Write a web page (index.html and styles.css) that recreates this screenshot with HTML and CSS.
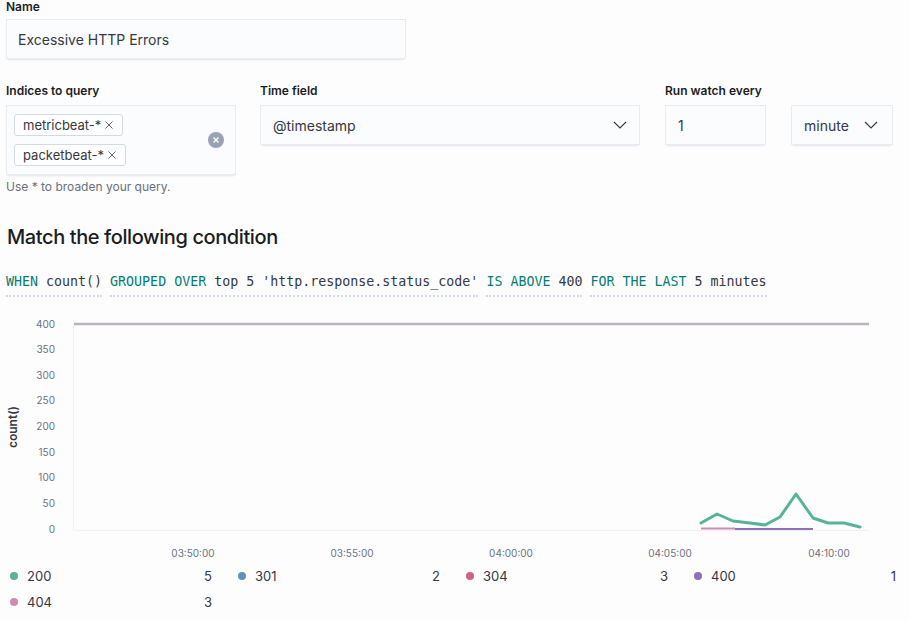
FILE: index.html
```html
<!DOCTYPE html>
<html>
<head>
<meta charset="utf-8">
<link rel="stylesheet" href="styles.css">
</head>
<body>
<div class="form">
  <div class="field">
    <label class="label first">Name</label>
    <div class="control name-input">Excessive HTTP Errors</div>
  </div>

  <div class="row">
    <div class="field col-indices">
      <label class="label">Indices to query</label>
      <div class="control combo">
        <div class="pills">
          <span class="pill">metricbeat-* <svg class="pill-x" width="8" height="8" viewBox="0 0 8 8"><path d="M0.5 0.5 L7.5 7.5 M7.5 0.5 L0.5 7.5" stroke="#5a606b" stroke-width="1"/></svg></span>
          <span class="pill">packetbeat-* <svg class="pill-x" width="8" height="8" viewBox="0 0 8 8"><path d="M0.5 0.5 L7.5 7.5 M7.5 0.5 L0.5 7.5" stroke="#5a606b" stroke-width="1"/></svg></span>
        </div>
        <span class="clear">
          <svg width="16" height="16" viewBox="0 0 16 16"><circle cx="8" cy="8" r="8" fill="#98a2b3"/><path d="M5.5 5.5 L10.5 10.5 M10.5 5.5 L5.5 10.5" stroke="#fff" stroke-width="1.3"/></svg>
        </span>
      </div>
      <div class="help">Use * to broaden your query.</div>
    </div>

    <div class="field col-time">
      <label class="label">Time field</label>
      <div class="control select">
        <span>@timestamp</span>
        <svg class="chev" width="14" height="8" viewBox="0 0 14 8"><path d="M1 1 L7 7 L13 1" fill="none" stroke="#343741" stroke-width="1.1"/></svg>
      </div>
    </div>

    <div class="field col-run">
      <label class="label">Run watch every</label>
      <div class="run-pair">
        <div class="control num">1</div>
        <div class="control select unit">
          <span>minute</span>
          <svg class="chev" width="14" height="8" viewBox="0 0 14 8"><path d="M1 1 L7 7 L13 1" fill="none" stroke="#343741" stroke-width="1.1"/></svg>
        </div>
      </div>
    </div>
  </div>

  <h2 class="title">Match the following condition</h2>

  <div class="expr">
    <span class="ex"><span class="kw">WHEN</span> <span class="val">count()</span></span>
    <span class="ex"><span class="kw">GROUPED OVER</span> <span class="val">top 5 'http.response.status_code'</span></span>
    <span class="ex"><span class="kw">IS ABOVE</span> <span class="val">400</span></span>
    <span class="ex"><span class="kw">FOR THE LAST</span> <span class="val">5 minutes</span></span>
  </div>
</div>

<svg class="chart" width="909" height="253" viewBox="0 0 909 253">
  <line x1="73.5" y1="14" x2="73.5" y2="220" stroke="#f1f0f4" stroke-width="1"/>
  <line x1="74" y1="220.5" x2="869" y2="220.5" stroke="#f1f0f4" stroke-width="1"/>
  <g class="ytick" text-anchor="end">
    <text x="55" y="17.5">400</text>
    <text x="55" y="43">350</text>
    <text x="55" y="68.5">300</text>
    <text x="55" y="94">250</text>
    <text x="55" y="120">200</text>
    <text x="55" y="145.5">150</text>
    <text x="55" y="171">100</text>
    <text x="55" y="196.5">50</text>
    <text x="55" y="222.5">0</text>
  </g>
  <text class="ytitle" transform="translate(17 117) rotate(-90)" text-anchor="middle">count()</text>
  <line x1="74" y1="14" x2="869" y2="14" stroke="#b7b5ba" stroke-width="2.5"/>
  <g class="xtick" text-anchor="middle">
    <text x="193" y="246.5">03:50:00</text>
    <text x="352" y="246.5">03:55:00</text>
    <text x="511" y="246.5">04:00:00</text>
    <text x="670" y="246.5">04:05:00</text>
    <text x="829" y="246.5">04:10:00</text>
  </g>
  <polyline points="701,218.5 735,218.5" fill="none" stroke="#ca8eae" stroke-width="2"/>
  <polyline points="735,219 813,219" fill="none" stroke="#9170b8" stroke-width="2"/>
  <polyline points="701,213 717,204 733,211 750,213 765,215 780,207 796,184 813,208 828,213 844,213 860,217" fill="none" stroke="#54b399" stroke-width="3" stroke-linejoin="round" stroke-linecap="round"/>
</svg>

<div class="legend">
  <div class="li"><span class="dot" style="background:#54b399"></span><span class="ll">200</span><span class="lv">5</span></div>
  <div class="li"><span class="dot" style="background:#6092c0"></span><span class="ll">301</span><span class="lv">2</span></div>
  <div class="li"><span class="dot" style="background:#d36086"></span><span class="ll">304</span><span class="lv">3</span></div>
  <div class="li"><span class="dot" style="background:#9170b8"></span><span class="ll">400</span><span class="lv">1</span></div>
  <div class="li"><span class="dot" style="background:#ca8eae"></span><span class="ll">404</span><span class="lv">3</span></div>
</div>
</body>
</html>
```

FILE: styles.css
```css
* { box-sizing: border-box; }
html, body { margin: 0; padding: 0; }
body {
  background: #fefdfe;
  font-family: Inter, "Noto Sans", sans-serif;
  color: #343741;
  width: 909px;
  height: 621px;
  overflow: hidden;
}
.form { padding: 0 6px; }
.field { display: flex; flex-direction: column; }
.label {
  font-size: 12px;
  line-height: 12px;
  font-weight: 600;
  color: #1a1c21;
  margin-bottom: 7px;
}
.label.first {
  line-height: 14px;
  margin-bottom: 5px;
}
.control {
  background: #fbfcfd;
  border: 1px solid #e9ebef;
  box-shadow: 0 1px 1px -1px rgba(152,162,179,.2), 0 3px 2px -2px rgba(152,162,179,.25);
  height: 40px;
  font-size: 14px;
  color: #343741;
  display: flex;
  align-items: center;
  padding: 0 12px;
}
.name-input { width: 400px; padding-left: 11px; }
.row { display: flex; margin-top: 26px; }
.row .label { margin-bottom: 8px; }
.col-indices { width: 230px; }
.col-time { width: 380px; margin-left: 24px; }
.col-run { margin-left: 25px; }
.combo {
  height: 70px;
  padding: 0 11px 0 7px;
}
.pills { display: flex; flex-direction: column; align-items: flex-start; gap: 8px; }
.pill {
  display: inline-flex;
  align-items: center;
  height: 22px;
  padding: 0 9px 0 8px;
  background: #fff;
  border: 1px solid #d3dae6;
  border-radius: 3px;
  font-size: 13px;
  color: #343741;
  white-space: nowrap;
}
.pill-x { margin-left: 4px; display: block; }
.clear { margin-left: auto; display: flex; }
.help { font-size: 12px; line-height: 12px; color: #69707d; margin-top: 6px; }
.select { justify-content: space-between; }
.chev { display: block; }
.run-pair { display: flex; gap: 25px; }
.num { width: 101px; }
.unit { width: 102px; padding-right: 14px; }
.title {
  font-size: 20px;
  line-height: 24px;
  font-weight: 500;
  color: #1a1c21;
  margin: 32px 0 0 1px;
  letter-spacing: -0.4px;
}
.expr {
  margin-top: 23px;
  font-family: "DejaVu Sans Mono", "Liberation Mono", monospace;
  font-size: 13.3px;
  line-height: 20px;
  white-space: nowrap;
  display: flex;
  gap: 8px;
}
.ex {
  white-space: pre;
  padding-bottom: 3px;
  border-bottom: 2px dotted #d3dae6;
}
.kw { color: #017d73; }
.val { color: #343741; }
.chart { display: block; margin-top: 13px; }
.ytick text, .xtick text {
  font-family: Inter, "Noto Sans", sans-serif;
  font-size: 10px;
  fill: #6a717d;
}
.ytitle {
  font-family: Inter, "Noto Sans", sans-serif;
  font-size: 12px;
  font-weight: 600;
  fill: #343741;
}
.legend {
  display: grid;
  grid-template-columns: repeat(4, 202px);
  column-gap: 26px;
  padding-left: 10px;
}
.li {
  display: flex;
  align-items: center;
  height: 26px;
  font-size: 13px;
  color: #343741;
}
.dot { width: 8px; height: 8px; border-radius: 50%; margin-right: 9px; flex: none; }
.ll { flex: 1; }
```
